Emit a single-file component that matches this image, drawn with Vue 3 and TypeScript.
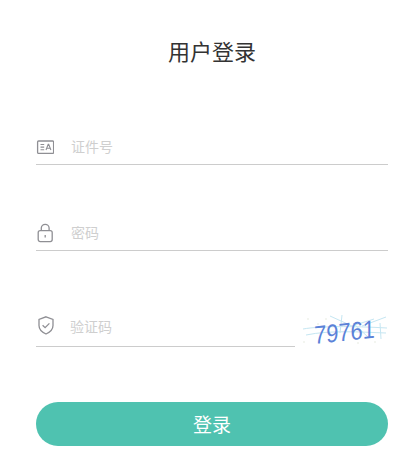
<script setup lang="ts">
import { ref } from 'vue'
const idNo = ref('')
const password = ref('')
const code = ref('')
</script>

<template>
  <main class="page">
    <h1 class="title">用户登录</h1>
    <form class="form" @submit.prevent>
      <label class="field first">
        <svg class="icon" width="18" height="14" viewBox="0 0 18 14" fill="none" stroke="#8f8f94">
          <rect x="1.600" y="1" width="16" height="12.400" rx="1" stroke-width="1.300" />
          <path d="M4.500 4.500h3.700M4.500 7.100h3.700M4.500 9.700h3.700" stroke-width="1.100" />
          <path d="M10 10l2.200-5.700h.5l2.200 5.700M10.800 8.200h3.300" stroke-width="1.100" />
        </svg>
        <input v-model="idNo" class="input" placeholder="证件号" />
      </label>
      <label class="field second">
        <svg class="icon" width="18" height="20" viewBox="0 0 18 20" fill="none" stroke="#8f8f94" stroke-width="1.300">
          <rect x="2.200" y="7.600" width="14" height="11" rx="2" />
          <path d="M5.300 7.600V5C5.300 3 7 1.300 9.200 1.300s3.900 1.700 3.900 3.700v2.600" />
          <path d="M9.200 12v2.400" stroke-width="1.300" />
        </svg>
        <input v-model="password" class="input" type="password" placeholder="密码" />
      </label>
      <div class="code-row">
        <label class="field code">
          <svg class="icon shield" width="18" height="20" viewBox="0 0 18 20" fill="none" stroke="#8f8f94" stroke-width="1.300">
            <path d="M10 .8l7 2.600v6.100c0 3.900-3 6.700-7 8.500-4-1.800-7-4.600-7-8.500V3.400z" />
            <path d="M6.600 9.300l2.500 2.400 4.300-4.300" />
          </svg>
          <input v-model="code" class="input" placeholder="验证码" />
        </label>
        <svg class="captcha" width="88" height="32" viewBox="0 0 88 32" role="img" aria-label="验证码图片">
          <g fill="none" stroke="#c5e6f2" stroke-width="1">
            <path d="M3 14C20 11 52 11 87 13" />
            <path d="M30 1l22 10 22-7M42 0l-2 18M62 11l24-9M53 8l16 15M80 8l1 16" />
            <path d="M6 20C30 15 60 17 86 18" />
          </g>
          <g fill="#e4e9dc">
            <circle cx="8" cy="4" r=".8" /><circle cx="18" cy="9" r=".8" /><circle cx="26" cy="4" r=".8" />
            <circle cx="4" cy="27" r=".8" /><circle cx="58" cy="28" r=".8" /><circle cx="75" cy="27" r=".8" />
          </g>
          <text class="captcha-text" transform="translate(14 29) rotate(-6) skewX(-6) scale(1 1.150)">79761</text>
        </svg>
      </div>
      <button class="submit" type="submit">登录</button>
    </form>
  </main>
</template>

<style scoped>
.page {
  box-sizing: border-box;
  width: 415px;
  height: 470px;
  padding: 38px 27px 0 36px;
  background: #fff;
  font-family: "Liberation Sans", "Noto Sans CJK SC", sans-serif;
}
.title {
  margin: 0;
  font-size: 22px;
  line-height: 30px;
  font-weight: 400;
  color: #333;
  text-align: center;
}
.form {
  display: flex;
  flex-direction: column;
}
.field {
  display: flex;
  align-items: center;
  height: 40px;
  box-sizing: border-box;
  border-bottom: 1px solid #ccc;
}
.first {
  margin-top: 57px;
  padding-top: 4px;
}
.second {
  margin-top: 46px;
  padding-top: 4px;
}
.icon {
  flex: none;
  margin-right: 17px;
}
.shield {
  margin-right: 16px;
  margin-top: -2px;
}
.input {
  flex: 1;
  min-width: 0;
  border: 0;
  outline: 0;
  padding: 0;
  background: transparent;
  font: inherit;
  font-size: 14px;
  color: #333;
}
.input::placeholder {
  color: #cfcfcf;
  opacity: 1;
}
.code-row {
  display: flex;
  align-items: flex-end;
  justify-content: space-between;
  margin-top: 56px;
}
.code {
  width: 259px;
}
.captcha {
  flex: none;
  overflow: visible;
}
.captcha-text {
  font-family: "Liberation Sans", sans-serif;
  font-size: 22px;
  fill: #5b82d8;
}
.submit {
  height: 44px;
  margin-top: 55px;
  padding: 0 0 2px;
  border: 0;
  border-radius: 22px;
  background: #4fc2b0;
  color: #fff;
  font: inherit;
  font-size: 19px;
  cursor: pointer;
}
</style>
